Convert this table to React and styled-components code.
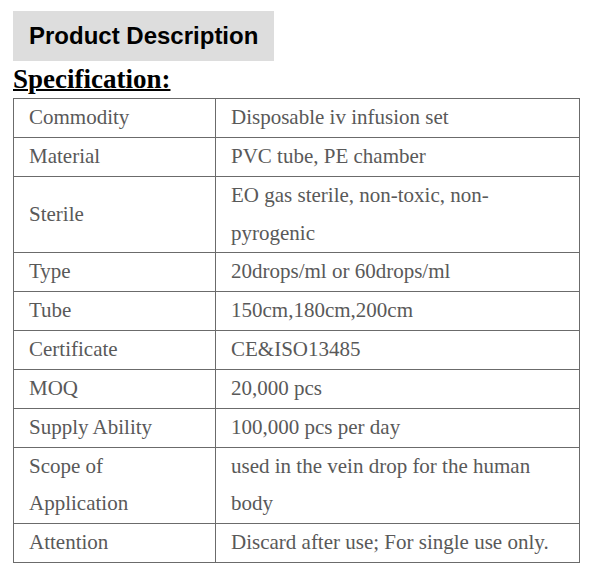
import React from "react";
import styled, { createGlobalStyle } from "styled-components";

const Global = createGlobalStyle`
  html, body { margin: 0; padding: 0; background: #ffffff; }
  body { font-family: "Liberation Serif", "Times New Roman", serif; }
`;

const Page = styled.div`
  padding: 11px 14px 0 13px;
  width: 567px;
`;

const TitleBox = styled.div`
  display: inline-flex;
  align-items: center;
  height: 50px;
  padding: 0 16px;
  background: #dddddd;
  font-family: "Liberation Sans", Arial, sans-serif;
  font-weight: bold;
  font-size: 24px;
  color: #000000;
`;

const SpecHeading = styled.h2`
  margin: 0;
  font-family: "Liberation Serif", "Times New Roman", serif;
  font-weight: bold;
  font-size: 27px;
  line-height: 37px;
  text-decoration: underline;
  text-decoration-thickness: 2px;
  color: #000000;
`;

const Table = styled.table`
  width: 567px;
  border-collapse: collapse;
  table-layout: fixed;
  font-family: "Liberation Serif", "Times New Roman", serif;
  font-size: 21px;
  color: #595959;
`;

const Cell = styled.td`
  border: 1px solid #6b6b6b;
  padding: 0 16px 0 15px;
  line-height: 37.85px;
  vertical-align: middle;
  width: ${(p) => (p.$wide ? "auto" : "170px")};
`;

const rows = [
  ["Commodity", "Disposable iv infusion set"],
  ["Material", "PVC tube, PE chamber"],
  ["Sterile", "EO gas sterile, non-toxic, non-pyrogenic"],
  ["Type", "20drops/ml or 60drops/ml"],
  ["Tube", "150cm,180cm,200cm"],
  ["Certificate", "CE&ISO13485"],
  ["MOQ", "20,000 pcs"],
  ["Supply Ability", "100,000 pcs per day"],
  ["Scope of Application", "used in the vein drop for the human body"],
  ["Attention", "Discard after use; For single use only."],
];

export default function App() {
  return (
    <>
      <Global />
      <Page>
        <TitleBox>Product Description</TitleBox>
        <SpecHeading>Specification:</SpecHeading>
        <Table>
          <tbody>
            {rows.map(([k, v]) => (
              <tr key={k}>
                <Cell>{k}</Cell>
                <Cell $wide>{v}</Cell>
              </tr>
            ))}
          </tbody>
        </Table>
      </Page>
    </>
  );
}
